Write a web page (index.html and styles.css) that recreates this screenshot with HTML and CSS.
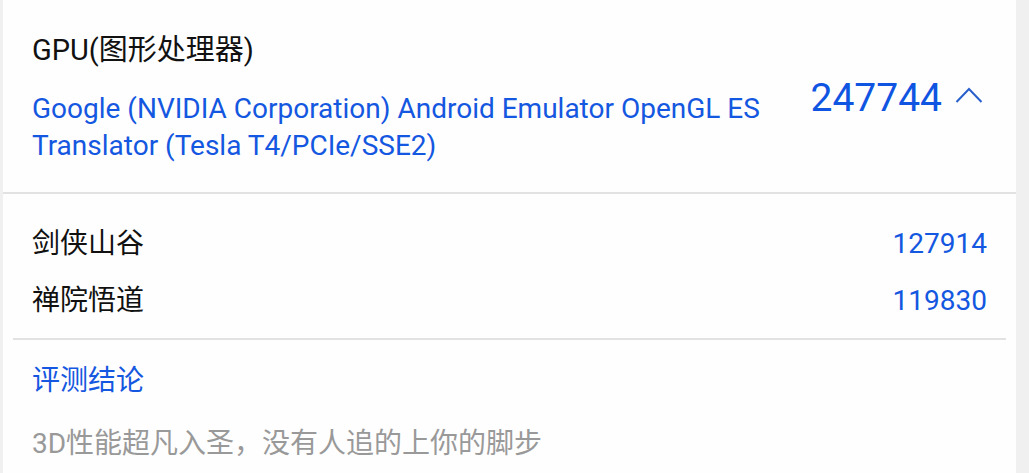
FILE: index.html
```html
<!DOCTYPE html>
<html lang="zh-CN">
<head>
<meta charset="utf-8">
<title>GPU</title>
<link rel="stylesheet" href="styles.css">
</head>
<body>
<main class="card">
  <header class="summary">
    <div class="device">
      <h1 class="title">GPU(图形处理器)</h1>
      <p class="model">Google (NVIDIA Corporation) Android Emulator OpenGL ES Translator (Tesla T4/PCIe/SSE2)</p>
    </div>
    <button class="total" type="button" aria-expanded="true">
      <span>247744</span>
      <svg class="chevron" viewBox="0 0 28 22" aria-hidden="true"><path d="M1.500 15 14 2 26.500 15"/></svg>
    </button>
  </header>
  <dl class="scores">
    <div class="row"><dt>剑侠山谷</dt><dd>127914</dd></div>
    <div class="row"><dt>禅院悟道</dt><dd>119830</dd></div>
  </dl>
  <section class="verdict">
    <h2 class="verdict-title">评测结论</h2>
    <p class="verdict-text">3D性能超凡入圣，没有人追的上你的脚步</p>
  </section>
</main>
</body>
</html>
```
FILE: styles.css
```css
* { box-sizing: border-box; }
body {
  margin: 0;
  background: #f0f0f0;
  color: #111;
  font: 28px/37px Roboto, "Noto Sans CJK SC", sans-serif;
}
h1, h2, p, dl, dd { margin: 0; font-size: inherit; font-weight: 400; }
.card {
  min-height: 100vh;
  margin: 0 13px 0 3px;
  background: #fefefe;
}
.summary {
  display: flex;
  align-items: center;
  justify-content: space-between;
  gap: 32px;
  padding: 30px 33px 28px 29px;
  border-bottom: 2px solid #e2e2e2;
}
.device { flex: 1; max-width: 740px; }
.title { font-size: 29px; line-height: 40px; margin-bottom: 20px; }
.model { color: #1457e0; }
.total {
  display: flex;
  align-items: center;
  gap: 13px;
  padding: 2px 0 0;
  border: 0;
  background: none;
  color: #0f55e2;
  font: inherit;
  font-size: 39px;
  line-height: 48px;
}
.chevron {
  width: 28px;
  height: 22px;
  fill: none;
  stroke: #2a60cc;
  stroke-width: 2;
}
.scores {
  display: grid;
  gap: 17px;
  margin: 0 10px;
  padding: 30px 19px 17px;
  border-bottom: 2px solid #e2e2e2;
}
.row { display: flex; justify-content: space-between; line-height: 40px; }
.row dd { color: #1457e0; }
.verdict { padding: 21px 29px 16px; line-height: 40px; }
.verdict-title { margin-bottom: 23px; color: #1457e0; }
.verdict-text { color: #999; }
```
